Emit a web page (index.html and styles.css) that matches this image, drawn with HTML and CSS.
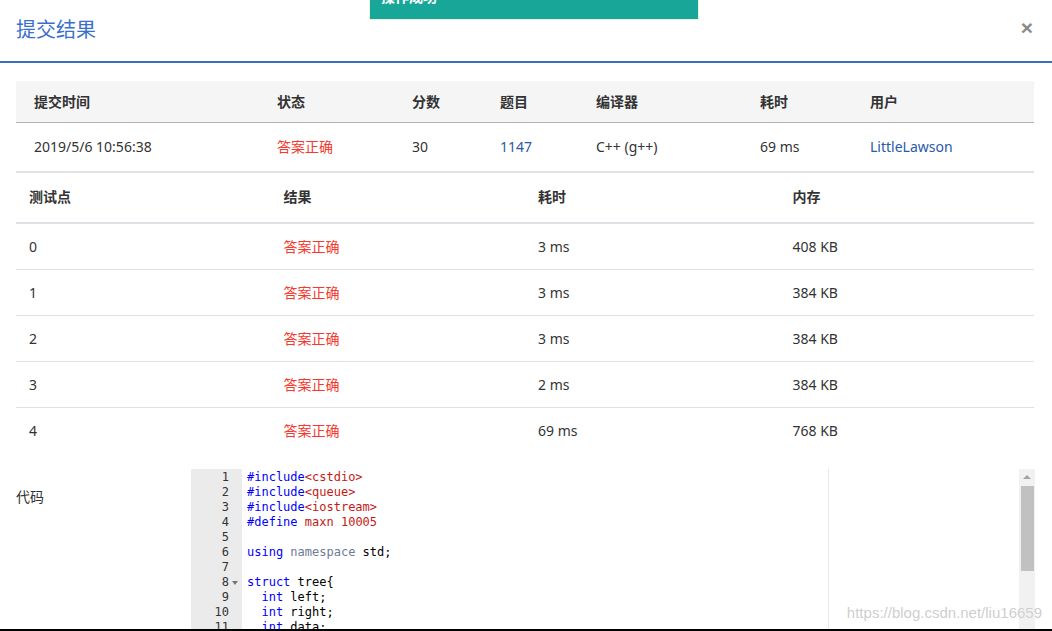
FILE: index.html
```html
<!DOCTYPE html>
<html lang="zh-CN">
<head>
<meta charset="utf-8">
<title>提交结果</title>
<link rel="stylesheet" href="styles.css">
</head>
<body>
<div class="modal">
  <div class="toast">操作成功</div>
  <header class="modal-header">
    <h4 class="title">提交结果</h4>
    <span class="close">×</span>
  </header>
  <div class="modal-body">
    <table class="summary">
      <colgroup>
        <col class="c1"><col class="c2"><col class="c3"><col class="c4"><col class="c5"><col class="c6"><col class="c7">
      </colgroup>
      <thead>
        <tr><th>提交时间</th><th>状态</th><th>分数</th><th>题目</th><th>编译器</th><th>耗时</th><th>用户</th></tr>
      </thead>
      <tbody>
        <tr>
          <td>2019/5/6 10:56:38</td>
          <td class="ok">答案正确</td>
          <td>30</td>
          <td><a class="link">1147</a></td>
          <td>C++ (g++)</td>
          <td>69 ms</td>
          <td><a class="link">LittleLawson</a></td>
        </tr>
      </tbody>
    </table>
    <table class="cases">
      <thead>
        <tr><th>测试点</th><th>结果</th><th>耗时</th><th>内存</th></tr>
      </thead>
      <tbody>
        <tr><td>0</td><td class="ok">答案正确</td><td>3 ms</td><td>408 KB</td></tr>
        <tr><td>1</td><td class="ok">答案正确</td><td>3 ms</td><td>384 KB</td></tr>
        <tr><td>2</td><td class="ok">答案正确</td><td>3 ms</td><td>384 KB</td></tr>
        <tr><td>3</td><td class="ok">答案正确</td><td>2 ms</td><td>384 KB</td></tr>
        <tr><td>4</td><td class="ok">答案正确</td><td>69 ms</td><td>768 KB</td></tr>
      </tbody>
    </table>
    <div class="code-row">
      <div class="code-label">代码</div>
      <div class="editor">
        <div class="gutter">
          <div class="ln">1</div>
          <div class="ln">2</div>
          <div class="ln">3</div>
          <div class="ln">4</div>
          <div class="ln">5</div>
          <div class="ln">6</div>
          <div class="ln">7</div>
          <div class="ln fold">8</div>
          <div class="ln">9</div>
          <div class="ln">10</div>
          <div class="ln">11</div>
          <div class="ln">12</div>
          <div class="ln">13</div>
        </div>
        <div class="content">
          <div class="line"><span class="kw">#include</span><span class="str">&lt;cstdio&gt;</span></div>
          <div class="line"><span class="kw">#include</span><span class="str">&lt;queue&gt;</span></div>
          <div class="line"><span class="kw">#include</span><span class="str">&lt;iostream&gt;</span></div>
          <div class="line"><span class="kw">#define</span> <span class="str">maxn 10005</span></div>
          <div class="line"></div>
          <div class="line"><span class="kw">using</span> <span class="ns">namespace</span> std;</div>
          <div class="line"></div>
          <div class="line"><span class="kw">struct</span> tree{</div>
          <div class="line">  <span class="kw">int</span> left;</div>
          <div class="line">  <span class="kw">int</span> right;</div>
          <div class="line">  <span class="kw">int</span> data;</div>
          <div class="line">};</div>
          <div class="line"></div>
          <div class="margin-line"></div>
        </div>
        <div class="scrollbar">
          <div class="arrow"></div>
          <div class="thumb"></div>
        </div>
      </div>
    </div>
  </div>
  <div class="watermark">https://blog.csdn.net/liu16659</div>
  <div class="bottom-edge"></div>
</div>
</body>
</html>
```
FILE: styles.css
```css
* { box-sizing: border-box; }
html, body {
  margin: 0;
  padding: 0;
  height: 100%;
  overflow: hidden;
  background: #fff;
}
body {
  font-family: "Noto Sans", "Noto Sans CJK SC", sans-serif;
  font-size: 14px;
  color: #333;
}
.modal {
  position: relative;
  width: 1052px;
  height: 631px;
  overflow: hidden;
}
.toast {
  position: absolute;
  left: 369px;
  top: 0;
  width: 330px;
  height: 20px;
  background: #17a697;
  border: 1px solid #eaf3de;
  border-top: none;
  color: #fff;
  font-weight: bold;
  font-size: 14px;
  line-height: 14px;
  padding-left: 11px;
  overflow: hidden;
}
.toast::before { content: ""; display: block; margin-top: -10px; }
.modal-header {
  display: flex;
  align-items: center;
  justify-content: space-between;
  height: 63px;
  padding: 0 16px;
  border-bottom: 2px solid #3a6bc9;
}
.title {
  margin: 0;
  font-weight: normal;
  font-size: 20px;
  color: #3a6fcc;
  margin-top: -5px;
}
.close {
  font-size: 21px;
  font-weight: bold;
  color: #8a8a8a;
  margin-right: 3px;
  margin-top: -6px;
  font-family: "Liberation Sans", sans-serif;
}
.modal-body {
  padding: 18px 18px 0 16px;
}
table {
  width: 1018px;
  border-collapse: separate;
  border-spacing: 0;
  table-layout: fixed;
}
th {
  text-align: left;
  font-weight: bold;
  color: #333;
}
.summary col.c1 { width: 243px; }
.summary col.c2 { width: 135px; }
.summary col.c3 { width: 88px; }
.summary col.c4 { width: 96px; }
.summary col.c5 { width: 164px; }
.summary col.c6 { width: 110px; }
.summary col.c7 { width: 182px; }
.summary th {
  background: #f5f5f5;
  height: 42px;
  padding: 0 0 1px 18px;
  border-bottom: 1px solid #b3b3b3;
}
.summary td {
  height: 50px;
  padding: 0 0 2px 18px;
  border-bottom: 2px solid #e0e2e6;
  vertical-align: middle;
}
.ok { color: #f5392e; }
.link { color: #2a5aa8; text-decoration: none; }
.cases th {
  height: 51px;
  padding: 0 0 4px 13px;
  border-bottom: 2px solid #dee2e6;
}
.cases td {
  height: 46px;
  padding: 0 0 1px 13px;
  border-top: 1px solid #dee2e6;
  vertical-align: middle;
}
.cases tbody tr:first-child td { border-top: none; height: 45px; }
.code-row {
  display: flex;
  margin-top: 16px;
}
.code-label {
  width: 175px;
  flex: none;
  padding-top: 17px;
  font-size: 14px;
}
.editor {
  flex: none;
  width: 844px;
  height: 200px;
  display: flex;
  font-family: "DejaVu Sans Mono", monospace;
  font-size: 12px;
  line-height: 15px;
  color: #000;
  position: relative;
}
.gutter {
  width: 51px;
  flex: none;
  background: #ebebeb;
  color: #333;
  text-align: right;
  padding-right: 13px;
  padding-top: 1px;
}
.ln { height: 15px; position: relative; }
.fold::after {
  content: "";
  position: absolute;
  right: -9px;
  top: 6px;
  border-left: 3px solid transparent;
  border-right: 3px solid transparent;
  border-top: 4px solid #777;
}
.content {
  flex: 1;
  padding-left: 5px;
  padding-top: 1px;
  position: relative;
}
.line { height: 15px; white-space: pre; }
.kw { color: #0000ff; }
.str { color: #c41a16; }
.ns { color: #6d7b94; }
.margin-line {
  position: absolute;
  left: 586px;
  top: 0;
  bottom: 0;
  width: 1px;
  background: #e8e8e8;
}
.scrollbar {
  width: 16px;
  flex: none;
  background: #f1f1f1;
  position: relative;
}
.arrow {
  margin: 6px auto 0;
  width: 0;
  height: 0;
  border-left: 4px solid transparent;
  border-right: 4px solid transparent;
  border-bottom: 4px solid #a3a3a3;
}
.thumb {
  margin: 7px auto 0;
  width: 13px;
  height: 85px;
  background: #c1c1c1;
}
.watermark {
  position: absolute;
  right: 10px;
  bottom: 10px;
  font-family: "Liberation Sans", sans-serif;
  font-size: 15px;
  color: rgba(200, 200, 200, 0.9);
  text-shadow: 0 0 1px #fff;
}
.bottom-edge {
  position: absolute;
  left: 0;
  right: 0;
  bottom: 0;
  height: 2px;
  background: #000;
}
```
